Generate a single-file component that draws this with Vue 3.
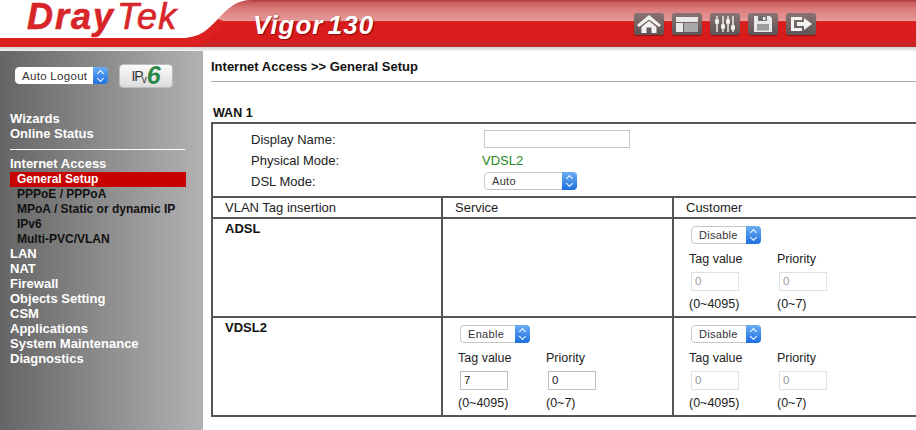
<script setup>
const topItems = ['Wizards', 'Online Status']
const subItems = ['PPPoE / PPPoA', 'MPoA / Static or dynamic IP', 'IPv6', 'Multi-PVC/VLAN']
const lowerItems = ['LAN', 'NAT', 'Firewall', 'Objects Setting', 'CSM', 'Applications', 'System Maintenance', 'Diagnostics']
</script>

<template>
  <div class="page">
    <header class="header">
      <svg class="banner" width="916" height="51" viewBox="0 0 916 51" aria-hidden="true">
        <defs>
          <linearGradient id="band" x1="0" y1="0" x2="0" y2="1">
            <stop offset="0" stop-color="#a83a3a" />
            <stop offset="0.05" stop-color="#c85a5a" />
            <stop offset="0.2" stop-color="#dd7d7d" />
            <stop offset="0.44" stop-color="#e59a9a" />
            <stop offset="0.46" stop-color="#dc1c1c" />
            <stop offset="0.85" stop-color="#d81c1c" />
            <stop offset="1" stop-color="#bd2a2a" />
          </linearGradient>
          <linearGradient id="shade" x1="0" y1="0" x2="0" y2="1">
            <stop offset="0" stop-color="#c9c9c9" />
            <stop offset="1" stop-color="#f4f4f4" />
          </linearGradient>
        </defs>
        <rect y="46" width="916" height="5" fill="url(#shade)" />
        <path d="M0 38 H182 C200 38 208 30 218 19 C228 8 236 0 252 0 H916 V47 H0 Z" fill="url(#band)" />
        <path d="M0 38 H182 C200 38 208 30 218 19 L226 22 C214 36 204 47 190 47 H0 Z" fill="#dc1f1f" />
      </svg>
      <div class="logo"><span class="dray">Dray</span><span class="tek">Tek</span></div>
      <div class="model">Vigor 130</div>
      <nav class="tools">
        <span class="tool">
          <svg width="24" height="18" viewBox="0 0 24 18"><path d="M12 0 L24 10 L22 12 L12 4.5 L2 12 L0 10 Z M4.5 12 L12 6 L19.5 12 V18 H14.5 V12.5 H9.5 V18 H4.5 Z" fill="#f2f2f2" /></svg>
        </span>
        <span class="tool">
          <svg width="24" height="18" viewBox="0 0 24 18"><rect x="1" y="2" width="22" height="5" fill="#e8e8e8" /><rect x="1" y="8" width="7" height="9" fill="#e8e8e8" /><rect x="9" y="8" width="14" height="9" fill="#a9a9a9" /></svg>
        </span>
        <span class="tool">
          <svg width="24" height="18" viewBox="0 0 24 18" fill="#f2f2f2" stroke="#f2f2f2" stroke-width="1.4"><path d="M4 1V17M10 1V17M15 1V17M20 1V17" fill="none" /><rect x="2.8" y="5" width="2.4" height="3" /><rect x="8.8" y="10" width="2.4" height="3" /><rect x="13.8" y="5" width="2.4" height="3" /><rect x="18.8" y="11" width="2.4" height="3" /></svg>
        </span>
        <span class="tool">
          <svg width="24" height="18" viewBox="0 0 24 18"><path d="M3 1 H19 L21 3 V17 H3 Z" fill="#e8e8e8" /><rect x="7" y="1" width="9" height="5" fill="#6d6d6d" /><rect x="12" y="2" width="2.5" height="3" fill="#e8e8e8" /><rect x="6" y="9" width="12" height="6.5" fill="#9c9c9c" /></svg>
        </span>
        <span class="tool">
          <svg width="24" height="18" viewBox="0 0 24 18"><path d="M13 2 H2 V16 H13 V13 H5 V5 H13 Z" fill="#f2f2f2" /><path d="M8 7 H15 V3 L23 9 L15 15 V11 H8 Z" fill="#f2f2f2" /></svg>
        </span>
      </nav>
    </header>

    <div class="body">
      <aside class="sidebar">
        <div class="side-top">
          <div class="select logout"><span class="select-text">Auto Logout</span><span class="stepper"><i class="up"></i><i class="down"></i></span></div>
          <div class="ipv6"><span class="ip">IP</span><span class="v">v</span><span class="six">6</span></div>
        </div>
        <ul class="menu">
          <li v-for="item in topItems" :key="item" class="main-item">{{ item }}</li>
          <li class="divider"></li>
          <li class="main-item">Internet Access</li>
          <li class="sub-item active">General Setup</li>
          <li v-for="item in subItems" :key="item" class="sub-item">{{ item }}</li>
          <li v-for="item in lowerItems" :key="item" class="main-item">{{ item }}</li>
        </ul>
      </aside>

      <main class="content">
        <h1 class="title">Internet Access &gt;&gt; General Setup</h1>
        <h2 class="wan">WAN 1</h2>
        <table class="wan-table">
          <colgroup><col class="c1" /><col class="c2" /><col class="c3" /></colgroup>
          <tbody>
            <tr>
              <td colspan="3" class="general">
                <div class="form-grid">
                  <span class="lab">Display Name:</span>
                  <span class="input name-input"></span>
                  <span class="lab">Physical Mode:</span>
                  <span class="lab green">VDSL2</span>
                  <span class="lab">DSL Mode:</span>
                  <div class="select auto"><span class="select-text">Auto</span><span class="stepper"><i class="up"></i><i class="down"></i></span></div>
                </div>
              </td>
            </tr>
            <tr class="head-row">
              <td>VLAN Tag insertion</td>
              <td>Service</td>
              <td>Customer</td>
            </tr>
            <tr class="data-row">
              <td class="mode">ADSL</td>
              <td></td>
              <td class="tagcell">
                <div class="select small"><span class="select-text">Disable</span><span class="stepper"><i class="up"></i><i class="down"></i></span></div>
                <div class="tag-grid">
                  <span>Tag value</span><span>Priority</span>
                  <span class="input num off">0</span><span class="input num off">0</span>
                  <span>(0~4095)</span><span>(0~7)</span>
                </div>
              </td>
            </tr>
            <tr class="data-row">
              <td class="mode">VDSL2</td>
              <td class="tagcell">
                <div class="select small"><span class="select-text">Enable</span><span class="stepper"><i class="up"></i><i class="down"></i></span></div>
                <div class="tag-grid">
                  <span>Tag value</span><span>Priority</span>
                  <span class="input num">7</span><span class="input num">0</span>
                  <span>(0~4095)</span><span>(0~7)</span>
                </div>
              </td>
              <td class="tagcell">
                <div class="select small"><span class="select-text">Disable</span><span class="stepper"><i class="up"></i><i class="down"></i></span></div>
                <div class="tag-grid">
                  <span>Tag value</span><span>Priority</span>
                  <span class="input num off">0</span><span class="input num off">0</span>
                  <span>(0~4095)</span><span>(0~7)</span>
                </div>
              </td>
            </tr>
          </tbody>
        </table>
      </main>
    </div>
  </div>
</template>

<style>
html, body { margin: 0; overflow: hidden; background: #fff; }
</style>

<style scoped>
.page {
  width: 916px;
  height: 430px;
  overflow: hidden;
  display: flex;
  flex-direction: column;
  font-family: "Liberation Sans", Arial, sans-serif;
  color: #222;
}
.header {
  position: relative;
  height: 51px;
  flex: none;
  display: flex;
}
.banner { position: absolute; left: 0; top: 0; }
.logo {
  position: relative;
  margin: 0 0 0 27px;
  width: 226px;
  font: italic bold 36px/34px "Liberation Sans", sans-serif;
  color: #d8252a;
  white-space: nowrap;
}
.dray { letter-spacing: 2px; -webkit-text-stroke: 0.6px #d8252a; }
.tek { margin-left: 2px; font-weight: 400; -webkit-text-stroke: 0.7px #d8252a; letter-spacing: 1.2px; }
.model {
  position: relative;
  margin: 10px 0 0 0;
  width: 381px;
  font: italic bold 26px/30px "Liberation Sans", sans-serif;
  color: #fff;
  letter-spacing: 1px;
  word-spacing: -4px;
  text-shadow: 1px 1px 1px rgba(90, 0, 0, .7);
  white-space: pre;
}
.tools {
  position: relative;
  display: flex;
  gap: 8px;
  margin-top: 13px;
  height: 22px;
}
.tool {
  width: 30px;
  height: 22px;
  box-sizing: border-box;
  border-radius: 3px;
  background: linear-gradient(#8a7272, #5f5555);
  display: flex;
  align-items: center;
  justify-content: center;
  box-shadow: 0 1px 1px rgba(80, 0, 0, .5);
}
.body { flex: 1; display: flex; min-height: 0; }
.sidebar {
  width: 203px;
  flex: none;
  background: linear-gradient(90deg, #656565, #b2b2b2);
}
.side-top {
  display: flex;
  align-items: center;
  gap: 11px;
  padding: 13px 0 0 15px;
  height: 24px;
}
.select {
  display: flex;
  align-items: stretch;
  box-sizing: border-box;
  height: 18px;
  background: #fff;
  border: 1px solid #c6c6c6;
  border-radius: 4px;
  font-size: 11px;
  color: #333;
}
.select-text { flex: 1; padding-left: 7px; line-height: 16px; letter-spacing: .3px; }
.stepper {
  width: 15px;
  margin: -1px;
  border-radius: 0 4px 4px 0;
  background: linear-gradient(#6aaef5, #1e6fe0);
  display: flex;
  flex-direction: column;
  align-items: center;
  justify-content: center;
  gap: 2px;
}
.up, .down {
  width: 5px;
  height: 5px;
  border: solid #fff;
  border-width: 1.3px 0 0 1.3px;
  box-sizing: border-box;
  display: block;
}
.up { transform: rotate(45deg); margin-bottom: -1px; }
.down { transform: rotate(225deg); margin-top: -1px; }
.logout { width: 93px; height: 17px; border-color: #fff; margin-top: -1px; }
.logout .select-text { font-size: 11.5px; padding-left: 6px; }
.ipv6 {
  width: 54px;
  height: 24px;
  box-sizing: border-box;
  border-radius: 4px;
  background: linear-gradient(#fbfbfb, #dcdcdc);
  border: 1px solid #bdbdbd;
  display: flex;
  align-items: center;
  justify-content: center;
  color: #333;
}
.ip { font-size: 14px; letter-spacing: -1px; }
.v { font-size: 10px; margin: 7px 0 0 -1px; }
.six { font: italic bold 25px/22px "Liberation Sans", sans-serif; color: #2a8a45; margin: -3px 0 0 0; }
.menu {
  list-style: none;
  margin: 0;
  padding: 0;
  margin-top: 23px;
  font-weight: 700;
  font-size: 13px;
  line-height: 15px;
}
.main-item { padding-left: 10px; color: #fff; }
.sub-item { margin-left: 10px; padding-left: 7px; width: 169px; font-size: 12px; color: #111; white-space: nowrap; }
.sub-item.active { background: #c80000; color: #fff; }
.main-item + .active { margin-top: 1px; }
.sub-item + .main-item { margin-top: -1px; }
.divider { height: 1px; width: 175px; margin: 8px 0 6px 0; margin-left: 10px; padding: 0; background: #fff; }
.content { flex: 1; min-width: 0; padding-left: 8px; }
.title {
  margin: 0;
  padding: 8px 0 7px;
  font-size: 13px;
  line-height: 15px;
  font-weight: 700;
  color: #111;
  border-bottom: 1px solid #a8a8a8;
}
.wan {
  margin: 24px 0 1px 2px;
  font-size: 12.5px;
  line-height: 15px;
  font-weight: 700;
  color: #111;
}
.wan-table {
  width: 730px;
  table-layout: fixed;
  border-collapse: collapse;
  font-size: 13px;
  line-height: 15px;
}
.c1 { width: 230px; }
.c2 { width: 231px; }
.wan-table td {
  border: 2px solid #555;
  padding: 0;
  vertical-align: top;
}
.general { height: 74px; box-sizing: border-box; }
.form-grid {
  display: grid;
  grid-template-columns: 233px 1fr;
  grid-auto-rows: 21px;
  align-items: center;
  padding: 4px 0 0 38px;
}
.lab { padding-top: 2px; }
.green { color: #1f8a1f; margin-left: -2px; }
.input {
  display: block;
  box-sizing: border-box;
  border: 1px solid #c8c8c8;
  background: #fff;
}
.name-input { width: 146px; height: 18px; }
.auto { width: 93px; }
.head-row td { height: 21px; box-sizing: border-box; padding-left: 12px; line-height: 19px; }
.data-row td { height: 99px; box-sizing: border-box; }
.mode { font-weight: 700; padding: 2px 0 0 12px !important; color: #111; }
.tagcell { padding: 7px 0 0 17px !important; }
.small { width: 70px; }
.tag-grid {
  display: grid;
  grid-template-columns: 88px 88px;
  grid-template-rows: 20px 25px 20px;
  align-items: center;
  margin: 5px 0 0 -2px;
  font-size: 12.5px;
}
.num {
  width: 48px;
  height: 19px;
  margin-left: 2px;
  padding-left: 3px;
  line-height: 17px;
  font-size: 11.5px;
  border-color: #bdbdbd;
  color: #222;
}
.off { color: #999; border-color: #e0e0e0; }
</style>
